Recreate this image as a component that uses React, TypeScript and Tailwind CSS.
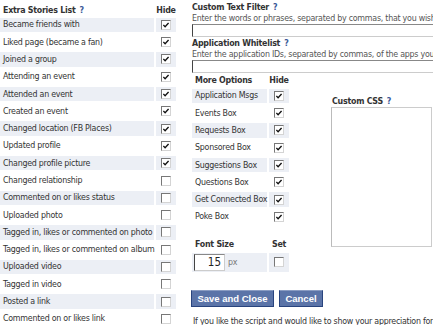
const font = { fontFamily: '"DejaVu Sans Condensed", "DejaVu Sans", Tahoma, sans-serif' };

const stories: [string, boolean][] = [
  ['Became friends with', true],
  ['Liked page (became a fan)', true],
  ['Joined a group', true],
  ['Attending an event', true],
  ['Attended an event', true],
  ['Created an event', true],
  ['Changed location (FB Places)', true],
  ['Updated profile', true],
  ['Changed profile picture', true],
  ['Changed relationship', false],
  ['Commented on or likes status', false],
  ['Uploaded photo', false],
  ['Tagged in, likes or commented on photo', false],
  ['Tagged in, likes or commented on album', false],
  ['Uploaded video', false],
  ['Tagged in video', false],
  ['Posted a link', false],
  ['Commented on or likes link', false],
];

const options = [
  'Application Msgs',
  'Events Box',
  'Requests Box',
  'Sponsored Box',
  'Suggestions Box',
  'Questions Box',
  'Get Connected Box',
  'Poke Box',
];

function Box({ checked }: { checked: boolean }) {
  return (
    <span className="relative block w-[10px] h-[10px] bg-white border border-t-[#777] border-l-[#777] border-b-[#d4d4d4] border-r-[#d4d4d4]">
      {checked && (
        <svg viewBox="0 0 8 8" className="absolute left-[1px] top-[1px] w-[6px] h-[6px]">
          <path d="M0.5 3.8 L2.8 6.2 L7.4 1.2" fill="none" stroke="#111" strokeWidth="1.8" />
        </svg>
      )}
    </span>
  );
}

function Q() {
  return <span className="text-[#3b5998] font-bold ml-[4px]">?</span>;
}

function Row({ label, checked, shaded, labelW }: { label: string; checked: boolean; shaded: boolean; labelW: string }) {
  return (
    <div className="flex gap-[2px] h-[14.3px]">
      <div className={`${labelW} shrink-0 pl-[3px] flex items-center whitespace-nowrap ${shaded ? 'bg-[#eceff5]' : ''}`}>{label}</div>
      <div className={`w-[20px] shrink-0 flex items-center justify-center ${shaded ? 'bg-[#eceff5]' : ''}`}>
        <Box checked={checked} />
      </div>
    </div>
  );
}

export default function App() {
  return (
    <div
      className="w-[433px] h-[325px] overflow-hidden bg-white flex text-[8.8px] leading-[11px] tracking-[-0.25px] text-[#333]"
      style={font}
    >
      {/* extra stories */}
      <div className="w-[178px] shrink-0 pt-[4.5px]">
        <div className="flex gap-[2px] h-[11px] font-bold">
          <div className="w-[154px] pl-[3px]">
            Extra Stories List<Q />
          </div>
          <div className="w-[20px] text-center">Hide</div>
        </div>
        <div className="flex flex-col gap-[3px] mt-[2.2px]">
          {stories.map(([label, checked], i) => (
            <Row key={label} label={label} checked={checked} shaded={i % 2 === 0} labelW="w-[154px]" />
          ))}
        </div>
      </div>

      {/* right side */}
      <div className="ml-[14px] w-[400px] shrink-0 pt-[2px]">
        <div className="font-bold h-[11px]">
          Custom Text Filter<Q />
        </div>
        <div className="h-[11px] whitespace-nowrap text-[#555]">
          Enter the words or phrases, separated by commas, that you wish to hide from your news feed
        </div>
        <div className="w-[300px] h-[13px] border border-t-[#888] border-l-[#444] border-b-[#ccc] border-r-[#ccc]" />
        <div className="font-bold h-[11px] mt-[1px]">
          Application Whitelist<Q />
        </div>
        <div className="h-[11px] whitespace-nowrap text-[#555]">
          Enter the application IDs, separated by commas, of the apps you want to always show
        </div>
        <div className="w-[300px] h-[13px] border border-t-[#888] border-l-[#444] border-b-[#ccc] border-r-[#ccc]" />

        <div className="flex mt-[2px]">
          <div className="w-[97px] shrink-0">
            <div className="flex gap-[2px] h-[11px] font-bold">
              <div className="w-[75px] pl-[3px]">More Options</div>
              <div className="w-[20px] text-center">Hide</div>
            </div>
            <div className="flex flex-col gap-[3px] mt-[2.7px]">
              {options.map((o, i) => (
                <Row key={o} label={o} checked shaded={i % 2 === 0} labelW="w-[75px]" />
              ))}
            </div>

            <div className="flex gap-[2px] h-[11px] font-bold mt-[15px]">
              <div className="w-[75px] pl-[3px]">Font Size</div>
              <div className="w-[20px] text-center">Set</div>
            </div>
            <div className="flex gap-[2px] h-[19px] mt-[2.5px]">
              <div className="w-[75px] bg-[#eceff5] flex items-center pl-[2px]">
                <div className="w-[31px] h-[17px] bg-white border border-t-[#888] border-l-[#444] border-b-[#ccc] border-r-[#ccc] text-right pr-[3px] text-[11.5px] leading-[15px] tracking-normal text-[#222]">
                  15
                </div>
                <span className="ml-[3px] text-[#777]">px</span>
              </div>
              <div className="w-[20px] bg-[#eceff5] flex items-center justify-center">
                <Box checked={false} />
              </div>
            </div>

            <div
              className="flex gap-[5px] mt-[18px] -ml-[1px] tracking-normal"
              style={{ fontFamily: '"Liberation Sans", Arial, sans-serif' }}
            >
              <div className="w-[83px] shrink-0 h-[17px] bg-[#5b74a8] border border-[#29447e] border-t-[#8a9cc2] text-white font-bold text-[9.5px] whitespace-nowrap flex items-center justify-center">
                Save and Close
              </div>
              <div className="w-[44px] shrink-0 h-[17px] bg-[#5b74a8] border border-[#29447e] border-t-[#8a9cc2] text-white font-bold text-[9.5px] whitespace-nowrap flex items-center justify-center">
                Cancel
              </div>
            </div>
          </div>

          <div className="ml-[42px] mt-[20.5px] shrink-0">
            <div className="font-bold h-[11px] pl-[1px]">
              Custom CSS<Q />
            </div>
            <div className="w-[101px] h-[140px] border border-[#ccc] border-l-[#bbb]" />
          </div>
        </div>

        <div className="mt-[9px] pl-[1px] whitespace-nowrap">
          If you like the script and would like to show your appreciation for all the time and effort
          <br />
          I have put into it, please consider making a small donation to support future development
        </div>
      </div>
    </div>
  );
}
